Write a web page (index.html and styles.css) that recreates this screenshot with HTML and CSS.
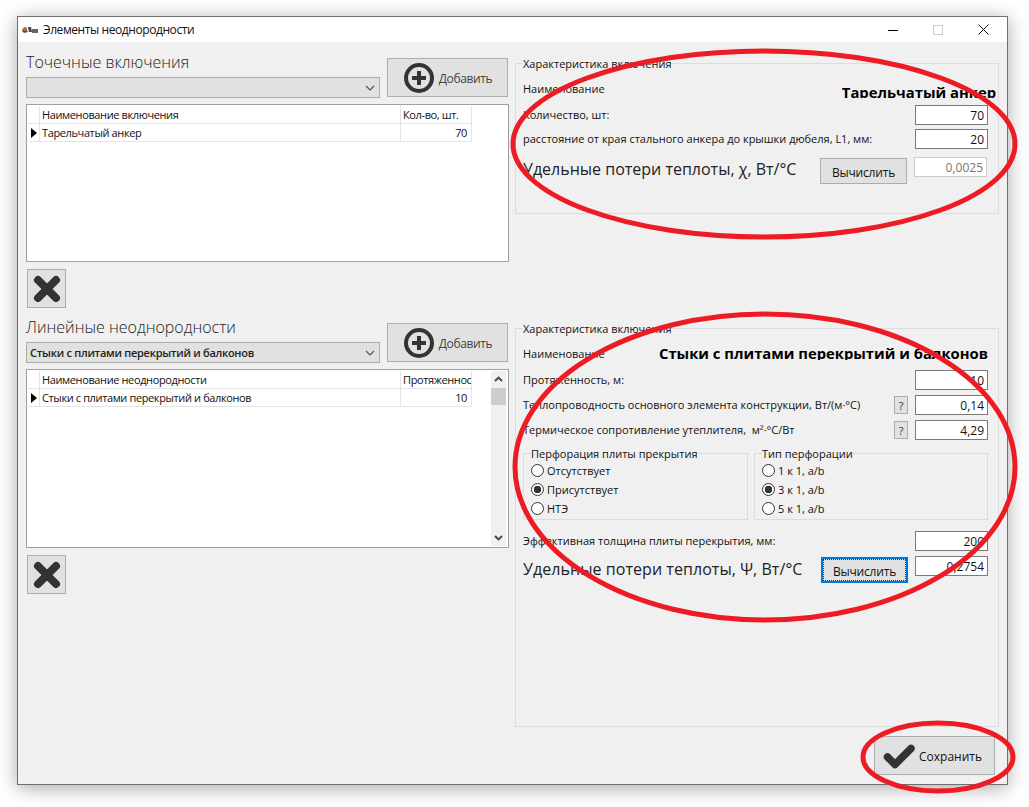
FILE: index.html
```html
<!DOCTYPE html>
<html lang="ru">
<head>
<meta charset="utf-8">
<title>Элементы неоднородности</title>
<link rel="stylesheet" href="styles.css">
</head>
<body>
<div class="window">
  <header class="titlebar">
    <svg class="app-icon" width="16" height="8" viewBox="0 0 16 8"><path d="M0 5 C1 1 4 1 5 4 L6 6 L2 7 Z" fill="#555"/><circle cx="3" cy="3" r="2" fill="#c8642a"/><path d="M6 1 L9 1 L10 6 L7 6 Z" fill="#444"/><rect x="10" y="3" width="6" height="4" fill="#666"/></svg>
    <span class="title">Элементы неоднородности</span>
    <div class="controls">
      <svg width="10" height="10" viewBox="0 0 10 10"><path d="M0 5.5H10" stroke="#000" fill="none"/></svg>
      <svg width="10" height="10" viewBox="0 0 10 10"><rect x=".5" y=".5" width="9" height="9" stroke="#ccc" fill="none"/></svg>
      <svg width="11" height="11" viewBox="0 0 11 11"><path d="M.5 .5L10.5 10.5M10.5 .5L.5 10.5" stroke="#111" fill="none"/></svg>
    </div>
  </header>

  <div class="body">
    <div class="left">
      <section class="list-section">
        <div class="list-top">
          <div class="picker">
            <h2 class="heading">Точечные включения</h2>
            <div class="combo"><span></span><svg width="10" height="6" viewBox="0 0 10 6"><path d="M1 1L5 5L9 1" stroke="#555" stroke-width="1.2" fill="none"/></svg></div>
          </div>
          <button class="btn btn-add">
            <svg width="32" height="32" viewBox="0 0 32 32"><circle cx="16" cy="16" r="13" stroke="#333" stroke-width="4" fill="none"/><path d="M16 9V23M9 16H23" stroke="#333" stroke-width="4" fill="none"/></svg>
            <span>Добавить</span>
          </button>
        </div>
        <div class="grid-box grid-short">
          <table class="grid">
            <colgroup><col class="c-head"><col class="c-name"><col class="c-qty"></colgroup>
            <tr><th></th><th>Наименование включения</th><th>Кол-во, шт.</th></tr>
            <tr><td class="mark"><i class="arrow"></i></td><td>Тарельчатый анкер</td><td class="num">70</td></tr>
          </table>
        </div>
        <button class="btn btn-del"><svg width="28" height="28" viewBox="0 0 28 28"><path d="M5 5L23 23M23 5L5 23" stroke="#333" stroke-width="8" stroke-linecap="round" fill="none"/></svg></button>
      </section>

      <section class="list-section second">
        <div class="list-top">
          <div class="picker">
            <h2 class="heading">Линейные неоднородности</h2>
            <div class="combo"><span>Стыки с плитами перекрытий и балконов</span><svg width="10" height="6" viewBox="0 0 10 6"><path d="M1 1L5 5L9 1" stroke="#555" stroke-width="1.2" fill="none"/></svg></div>
          </div>
          <button class="btn btn-add">
            <svg width="32" height="32" viewBox="0 0 32 32"><circle cx="16" cy="16" r="13" stroke="#333" stroke-width="4" fill="none"/><path d="M16 9V23M9 16H23" stroke="#333" stroke-width="4" fill="none"/></svg>
            <span>Добавить</span>
          </button>
        </div>
        <div class="grid-box grid-tall">
          <table class="grid">
            <colgroup><col class="c-head"><col class="c-name"><col class="c-qty"></colgroup>
            <tr><th></th><th>Наименование неоднородности</th><th>Протяженность, м</th></tr>
            <tr><td class="mark"><i class="arrow"></i></td><td>Стыки с плитами перекрытий и балконов</td><td class="num">10</td></tr>
          </table>
          <div class="scrollbar">
            <svg width="15" height="17" viewBox="0 0 15 17"><path d="M4 10L7.500 6.500L11 10" stroke="#444" stroke-width="1.800" fill="none"/></svg>
            <div class="thumb"></div>
            <svg class="down" width="15" height="17" viewBox="0 0 15 17"><path d="M4 7L7.500 10.500L11 7" stroke="#444" stroke-width="1.800" fill="none"/></svg>
          </div>
        </div>
        <button class="btn btn-del"><svg width="28" height="28" viewBox="0 0 28 28"><path d="M5 5L23 23M23 5L5 23" stroke="#333" stroke-width="8" stroke-linecap="round" fill="none"/></svg></button>
      </section>
    </div>

    <div class="right">
      <fieldset class="group group-one">
        <legend>Характеристика включения</legend>
        <div class="row name-row name-one"><span class="label">Наименование</span><strong class="name-value">Тарельчатый анкер</strong></div>
        <div class="row field-row first-one"><span class="label">Количество, шт:</span><input class="field" value="70" readonly></div>
        <div class="row field-row tight"><span class="label">расстояние от края стального анкера до крышки дюбеля, L1, мм:</span><input class="field" value="20" readonly></div>
        <div class="row calc-row calc-one"><span class="label big">Удельные потери теплоты, χ, Вт/°С</span><button class="btn btn-calc"><span>Вычислить</span></button><input class="field disabled" value="0,0025" readonly></div>
      </fieldset>

      <fieldset class="group group-two">
        <legend>Характеристика включения</legend>
        <div class="row name-row name-two"><span class="label">Наименование</span><strong class="name-value">Стыки с плитами перекрытий и балконов</strong></div>
        <div class="row field-row first-two"><span class="label">Протяженность, м:</span><input class="field" value="10" readonly></div>
        <div class="row field-row loose"><span class="label">Теплопроводность основного элемента конструкции, Вт/(м·°С)</span><button class="btn btn-q">?</button><input class="field" value="0,14" readonly></div>
        <div class="row field-row loose"><span class="label">Термическое сопротивление утеплителя,  м²·°С/Вт</span><button class="btn btn-q">?</button><input class="field" value="4,29" readonly></div>
        <div class="subgroups">
          <fieldset class="group sub sub-a">
            <legend>Перфорация плиты прекрытия</legend>
            <label class="radio"><input type="radio" name="p"><span>Отсутствует</span></label>
            <label class="radio"><input type="radio" name="p" checked><span>Присутствует</span></label>
            <label class="radio"><input type="radio" name="p"><span>НТЭ</span></label>
          </fieldset>
          <fieldset class="group sub sub-b">
            <legend>Тип перфорации</legend>
            <label class="radio"><input type="radio" name="t"><span>1 к 1, a/b</span></label>
            <label class="radio"><input type="radio" name="t" checked><span>3 к 1, a/b</span></label>
            <label class="radio"><input type="radio" name="t"><span>5 к 1, a/b</span></label>
          </fieldset>
        </div>
        <div class="row field-row first-eff"><span class="label">Эффективная толщина плиты перекрытия, мм:</span><input class="field" value="200" readonly></div>
        <div class="row calc-row calc-two"><span class="label big">Удельные потери теплоты, Ψ, Вт/°С</span><button class="btn btn-calc focused"><span>Вычислить</span></button><input class="field" value="0,2754" readonly></div>
      </fieldset>

      <div class="footer">
        <button class="btn btn-save">
          <svg width="32" height="26" viewBox="0 0 32 26"><path d="M4.500 14L12 21.500L28 5.500" stroke="#333" stroke-width="7.500" stroke-linecap="round" stroke-linejoin="round" fill="none"/></svg>
          <span>Сохранить</span>
        </button>
      </div>
    </div>
  </div>
</div>
<svg class="marks" width="1029" height="807" viewBox="0 0 1029 807">
  <ellipse cx="764" cy="144" rx="251" ry="93"/>
  <ellipse cx="765" cy="467" rx="250" ry="153"/>
  <ellipse cx="938" cy="757" rx="75" ry="34"/>
</svg>
</body>
</html>
```
FILE: styles.css
```css
* { box-sizing: border-box; }
html, body { margin: 0; padding: 0; background: #fff; }
body {
  width: 1029px;
  height: 807px;
  overflow: hidden;
  position: relative;
  font-family: "Open Sans", "Noto Sans", sans-serif;
  font-size: 11px;
  color: #111;
}
.window {
  margin: 16px 0 0 17px;
  width: 991px;
  height: 769px;
  border: 1px solid #6f6f6f;
  background: #f0f0f0;
  box-shadow: 0 3px 18px rgba(0, 0, 0, .35);
  display: flex;
  flex-direction: column;
}
.titlebar {
  height: 25px;
  background: #fff;
  display: flex;
  align-items: center;
  flex: none;
}
.app-icon { margin-left: 4px; }
.title { margin-left: 5px; font-size: 12px; letter-spacing: -.42px; color: #111; }
.controls { margin-left: auto; display: flex; align-items: center; gap: 35px; padding-right: 18px; }
.body {
  flex: 1;
  display: grid;
  grid-template-columns: 483px 484px;
  column-gap: 6px;
  padding-left: 8px;
}
.left { padding-top: 11px; }
.list-section.second { margin-top: 10px; }
.list-top { display: flex; height: 45px; }
.picker { width: 354px; flex: none; }
.heading { margin: 0; height: 24px; font-size: 16px; line-height: 19px; font-weight: 300; color: #222; }
.combo {
  height: 21px;
  background: #e1e1e1;
  border: 1px solid #adadad;
  display: flex;
  align-items: center;
  justify-content: space-between;
  padding: 0 4px 0 3px;
  font-weight: 600;
  letter-spacing: -.27px;
  color: #222;
}
.btn {
  background: #e1e1e1;
  border: 1px solid #adadad;
  padding: 0;
  font-family: inherit;
  font-size: 12px;
  color: #111;
  display: flex;
  align-items: center;
  justify-content: center;
}
.btn-add { width: 121px; height: 39px; margin: 5px 0 0 7px; gap: 4px; color: #444; letter-spacing: -.35px; flex: none; }
.btn-add span { padding-top: 2px; }
.grid-box {
  margin-top: 6px;
  background: #fff;
  border: 1px solid #a0a0a0;
  padding: 1px;
  display: flex;
  justify-content: space-between;
}
.grid-short { height: 158px; }
.grid-tall { height: 179px; }
.grid { border-collapse: separate; border-spacing: 0; table-layout: fixed; width: 444px; height: 36px; }
.c-head { width: 12px; }
.c-name { width: 361px; }
.c-qty { width: 71px; }
.grid th, .grid td {
  height: 18px;
  padding: 0 2px;
  border-right: 1px solid #e4e4e4;
  border-bottom: 1px solid #e4e4e4;
  font-weight: 400;
  font-size: 11px;
  letter-spacing: -.38px;
  text-align: left;
  white-space: nowrap;
  overflow: hidden;
  color: #111;
}
.grid .num { text-align: right; padding-right: 4px; }
.grid .mark { padding: 0 0 0 3px; }
.arrow {
  display: block;
  width: 0;
  height: 0;
  border-left: 6px solid #000;
  border-top: 5.5px solid transparent;
  border-bottom: 5.5px solid transparent;
}
.scrollbar {
  width: 15px;
  margin-right: 1px;
  background: #f0f0f0;
  display: flex;
  flex-direction: column;
  flex: none;
}
.thumb { height: 17px; background: #cdcdcd; flex: none; }
.down { margin-top: auto; }
.btn-del { width: 39px; height: 39px; margin: 7px 0 0 1px; }

.group {
  margin: 0;
  border: 1px solid #dcdcdc;
  padding: 0 10px 0 7px;
  min-width: 0;
}
.group legend { padding: 2px 0 0; font-size: 11px; line-height: 14px; color: #111; }
.right { padding-top: 13px; }
.group-one { height: 159px; }
.group-two { height: 407px; margin-top: 106px; }
.row { display: flex; align-items: center; }
.label { flex: 1; white-space: pre; }
.big { font-size: 16px; color: #222; }
.name-row { height: 18px; align-items: flex-start; justify-content: space-between; }
.name-row .label { flex: none; line-height: 16px; }
.name-value { font-size: 14.800px; line-height: 20px; overflow: hidden; white-space: nowrap; color: #000; }
.name-one { margin-top: 10px; margin-right: -8px; }
.name-one .name-value { height: 16px; margin-top: 1px; }
.name-two { margin-top: 10px; }
.name-two .name-value { height: 17px; margin-top: -3px; }
.field {
  width: 73px;
  height: 20px;
  border: 1px solid #7a7a7a;
  background: #fff;
  text-align: right;
  font-family: inherit;
  font-size: 12px;
  color: #111;
  padding: 0 3px;
  margin: 0;
  outline: none;
}
.field.disabled { border-color: #ccc; color: #777; margin-left: 7px; }
.field-row { height: 20px; }
.field-row .label { margin-bottom: 2px; }
.first-one { margin-top: 6px; }
.tight { margin-top: 4px; }
.first-two { margin-top: 6px; }
.loose { margin-top: 5px; }
.first-eff { margin-top: 11px; }
.btn-q { width: 14px; height: 18px; margin-right: 7px; color: #333; font-size: 11px; }
.calc-row { align-items: flex-start; }
.calc-one { margin-top: 8px; padding-right: 1px; }
.calc-two { margin-top: 5px; }
.calc-row .label { line-height: 24px; }
.calc-two .label { line-height: 26px; letter-spacing: .06px; }
.btn-calc { width: 87px; height: 26px; margin-top: 1px; letter-spacing: -.2px; }
.btn-calc span { padding-top: 3px; }
.focused { border: 2px solid #0078d7; margin-right: 7px; }
.focused span { display: flex; align-items: center; justify-content: center; width: 100%; height: 100%; outline: 1px dotted #333; outline-offset: -1px; }
.subgroups { display: flex; justify-content: space-between; margin-top: 5px; height: 75px; }
.sub { padding: 0 7px; }
.sub-a { width: 225px; }
.sub-b { width: 234px; }
.radio { display: flex; align-items: center; height: 19px; gap: 3px; }
.radio input {
  appearance: none;
  margin: 0;
  width: 13px;
  height: 13px;
  border: 1px solid #333;
  border-radius: 50%;
  background: #fff;
}
.radio input:checked { background: radial-gradient(circle, #333 0 3.500px, #fff 4px); }
.footer { display: flex; justify-content: flex-end; padding: 9px 4px 0 0; }
.btn-save { width: 121px; height: 39px; gap: 4px; padding: 2px 4px 0 0; }
.btn-save svg { margin-top: -2px; }
.marks { position: absolute; left: 0; top: 0; pointer-events: none; }
.marks ellipse { fill: none; stroke: #ed1c24; stroke-width: 5; }
```
